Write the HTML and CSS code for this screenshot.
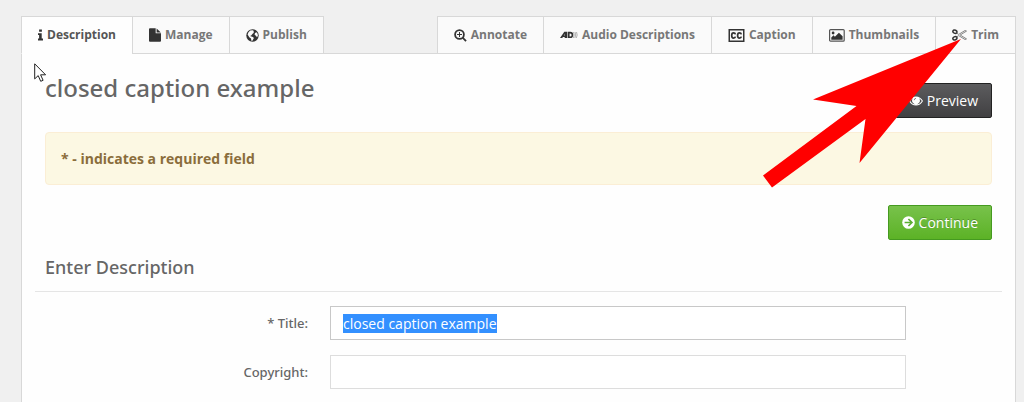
FILE: index.html
```html
<!DOCTYPE html>
<html lang="en">
<head>
  <meta charset="UTF-8" />
  <meta name="viewport" content="width=device-width, initial-scale=1" />
  <title>closed caption example</title>
  <link rel="stylesheet" href="styles.css">
</head>
<body>
  <nav class="tabs">
    <a class="tab active" href="#description">
      <svg class="icon" width="5" height="12" viewBox="0.300 0 5.400 12"><path d="M1.5 0h3v2.4h-3zM0.3 4h4v5.8H5.7V12H0.3V9.8H1.5V6H0.3z"/></svg>
      Description
    </a>
    <a class="tab" href="#manage">
      <svg class="icon" width="12" height="14" viewBox="0 0 12.600 14"><path d="M1 0h6v5.2h5.6V13a1 1 0 0 1-1 1H1a1 1 0 0 1-1-1V1a1 1 0 0 1 1-1zM8 0.2L12.4 4.3H8z"/></svg>
      Manage
    </a>
    <a class="tab" href="#publish">
      <svg class="icon" width="13" height="13" viewBox="0 0 13 13"><circle cx="6.5" cy="6.5" r="6.2"/><path fill="#fafafa" d="M4.2 1.6l2.600-.3 1.300 1-1 .6 1 .7-1.500 1.200-1.400 1.600-1.200.6 1.400.6 1.500.3 1 1.200-.8 1.300-.9 1.600-.8-.3-.4-2.300-1.700-1.200L1.600 5.500 2.500 3.200zM9 4l1.500-.8 1.100 1.600.3 2-.9 1.500-1.100-1.600-1.300-.9z"/></svg>
      Publish
    </a>
    <span class="tab-space"></span>
    <a class="tab" href="#annotate">
      <svg class="icon" width="13" height="13" viewBox="0 0 13 13"><circle cx="5.5" cy="5.5" r="4.4" fill="none" stroke="#333" stroke-width="1.8"/><path d="M8 9.2L9.2 8l3.5 3.4-1.3 1.3zM5 3h1v2h2v1H6v2H5V6H3V5h2z"/></svg>
      Annotate
    </a>
    <a class="tab" href="#audio">
      <svg class="icon" width="18" height="14" viewBox="0 0 18 14"><path fill-rule="evenodd" d="M0 10L4.3 3.8H7V10H4.7V9H2.9L2.3 10zM3.8 7.5h.9V6zM7.6 3.8h2.6a3.1 3.1 0 0 1 0 6.2H7.6zM9.6 5.4v3h.5a1.5 1.5 0 0 0 0-3z"/><path d="M13.5 4q1.5 3-.2 6M15 4q1.6 3-.2 6M16.5 4q1.5 3-.2 6" fill="none" stroke="#aaa" stroke-width=".9"/></svg>
      Audio Descriptions
    </a>
    <a class="tab" href="#caption">
      <svg class="icon" width="17" height="13" viewBox="0 0 17 13"><path fill-rule="evenodd" d="M.5 0h16v13H.5zM2 1.5v10h13v-10z"/><path d="M7.4 5.3Q7.2 3.9 5.5 3.9 3.7 3.9 3.7 6.5T5.5 9.1Q7.2 9.1 7.4 7.7M13.3 5.3Q13.1 3.9 11.4 3.9 9.6 3.9 9.6 6.5t1.8 2.6Q13.1 9.1 13.3 7.7" fill="none" stroke="#333" stroke-width="1.7"/></svg>
      Caption
    </a>
    <a class="tab" href="#thumbnails">
      <svg class="icon" width="16" height="13" viewBox="0 0 16 13"><rect x=".6" y=".6" width="14.6" height="11.6" rx="1" fill="none" stroke="#555" stroke-width="1.2"/><circle cx="4.1" cy="4" r="1.4"/><path d="M2.3 10.7V8.5l2.2-2.2 1.4 1.4 4-4 3.7 3.6v3.4z"/></svg>
      Thumbnails
    </a>
    <a class="tab" href="#trim">
      <svg class="icon" width="15" height="12" viewBox="0 0 15 12"><g fill="none" stroke="#333" stroke-width="1.5"><ellipse cx="2.9" cy="2.7" rx="2.1" ry="1.6" transform="rotate(25 2.9 2.7)"/><ellipse cx="2.9" cy="9.3" rx="2.1" ry="1.6" transform="rotate(-25 2.9 9.3)"/></g><path d="M4.5 4l2.2 1.4L13 1.5l1.5.6L8.2 6l6.3 3.9-1.5.6-6.3-3.9L4.5 8" fill="none" stroke="#777" stroke-width=".9"/></svg>
      Trim
    </a>
  </nav>

  <main class="panel">
    <div class="entry-header">
      <h1>closed caption example</h1>
      <button type="button" class="btn btn-inverse">
        <svg class="icon" width="14" height="12" viewBox="0 0 14 12"><path fill-rule="evenodd" d="M0 6Q2.6 1.4 7 1.4T14 6Q11.4 10.6 7 10.6T0 6zm1.2 0Q3.4 9.6 7 9.6T12.8 6Q11.8 4.2 10 3.2A3.8 3.8 0 1 1 4 3.2Q2.2 4.2 1.2 6z"/><circle cx="7" cy="5.2" r="3.2"/><path d="M5.2 5.2A1.8 1.8 0 0 1 7 3.4" fill="none" stroke="#555" stroke-width=".7"/></svg>
        Preview
      </button>
    </div>

    <div class="alert">* - indicates a required field</div>

    <form id="entryForm">
      <div class="actions">
        <button type="submit" class="btn btn-success">
          <svg class="icon" width="13" height="13" viewBox="0 0 13 13"><circle cx="6.5" cy="6.5" r="6.3"/><path d="M2.6 6.5h7M6.4 3l3.5 3.5L6.4 10" fill="none" stroke="#5cae33" stroke-width="1.7"/></svg>
          Continue
        </button>
      </div>
      <h2>Enter Description</h2>
      <div class="field">
        <label for="title">* Title:</label>
        <input type="text" id="title" name="title" value="closed caption example" />
      </div>
      <div class="field">
        <label for="copyright">Copyright:</label>
        <input type="text" id="copyright" name="copyright" />
      </div>
    </form>
  </main>

  <!-- pointer and arrow lie over the page -->
  <svg class="cursor" width="13" height="20" viewBox="0 0 13 20"><path d="M.7.8v15.1l3.5-3.3 2.5 5.7 2.4-1-2.5-5.5h5z" fill="#fff" stroke="#222"/></svg>
  <svg class="arrow" width="198" height="149" viewBox="0 0 198 149"><path d="M198 0L50 60.5l43.5 6.5L0 136.500l9 12 93.500-68.500L96.500 124z" fill="#f00"/></svg>

  <script>
    document.getElementById('entryForm').addEventListener('submit', function (event) {
      event.preventDefault();
    });
    const title = document.getElementById('title');
    title.focus();
    title.select();
  </script>
</body>
</html>
```
FILE: styles.css
```css
* {
  box-sizing: border-box;
}
body {
  display: flex;
  flex-direction: column;
  position: relative;
  min-height: 100vh;
  margin: 0;
  padding: 16px 8px 0 21px;
  font-family: "Open Sans", sans-serif;
  font-size: 14px;
  line-height: 20px;
  color: #666;
  background-color: #f0f0f0;
}
.icon {
  flex: none;
  fill: #333;
}
.tabs {
  display: flex;
}
.tab {
  display: flex;
  align-items: center;
  gap: 4px;
  height: 38px;
  padding: 0 16px;
  margin-right: -1px;
  border: 1px solid #d8d8d8;
  background-color: #fafafa;
  color: #777;
  font-size: 12px;
  font-weight: 700;
  text-decoration: none;
  white-space: nowrap;
}
.tab:last-child {
  margin-right: 0;
}
.tab.active {
  border-bottom-color: #fefefe;
  background-color: #fefefe;
  color: #555;
}
.tab-space {
  flex: 1;
  border-bottom: 1px solid #d8d8d8;
}
.panel {
  flex: 1;
  padding: 20px 23px 12px;
  border: solid #d8d8d8;
  border-width: 0 1px;
  background-color: #fefefe;
}
.entry-header {
  display: flex;
  justify-content: space-between;
  align-items: flex-end;
  height: 44px;
  margin-bottom: 14px;
}
h1,
h2,
.field label {
  font-family: "Noto Sans", "Open Sans", sans-serif;
  font-weight: 500;
}
h1 {
  margin: 0 0 14px;
  font-size: 24px;
  line-height: 32px;
}
.btn {
  display: flex;
  align-items: center;
  gap: 4px;
  height: 35px;
  padding: 0 13px;
  border: 1px solid;
  border-radius: 2px;
  font: inherit;
  color: #fff;
  cursor: pointer;
}
.btn .icon {
  fill: #fff;
}
.btn-inverse {
  border-color: #222;
  background: linear-gradient(#5c5c5e, #414042);
}
.btn-success {
  border-color: #459a20;
  background: linear-gradient(#78c24b, #5cb226);
  text-shadow: 0 -1px 0 rgba(0, 0, 0, 0.25);
}
.alert {
  padding: 16px 15px 15px;
  border: 1px solid #fbeed5;
  border-radius: 4px;
  background-color: #fcf8e3;
  color: #8a6d3b;
  font-weight: 700;
}
.actions {
  display: flex;
  justify-content: flex-end;
  margin-top: 20px;
}
h2 {
  margin: 0 -10px 14px;
  padding: 15px 10px 12px;
  border-bottom: 1px solid #e5e5e5;
  font-size: 18px;
  line-height: 24px;
}
.field {
  display: grid;
  grid-template-columns: 263px 1fr;
  align-items: center;
  gap: 22px;
  margin-bottom: 15px;
  padding-right: 86px;
}
.field label {
  font-size: 13px;
  text-align: right;
}
.field input {
  width: 100%;
  height: 34px;
  padding: 0 12px;
  border: 1px solid #ddd;
  background-color: #fff;
  font: inherit;
  line-height: 19px;
  color: #555;
}
.field input:focus {
  border-color: #c8c8c8;
  outline: none;
}
.field input::selection {
  background-color: #3390ff;
  color: #fff;
}
.cursor {
  position: absolute;
  top: 63px;
  left: 34px;
}
.arrow {
  position: absolute;
  top: 39px;
  right: 63px;
}
```
